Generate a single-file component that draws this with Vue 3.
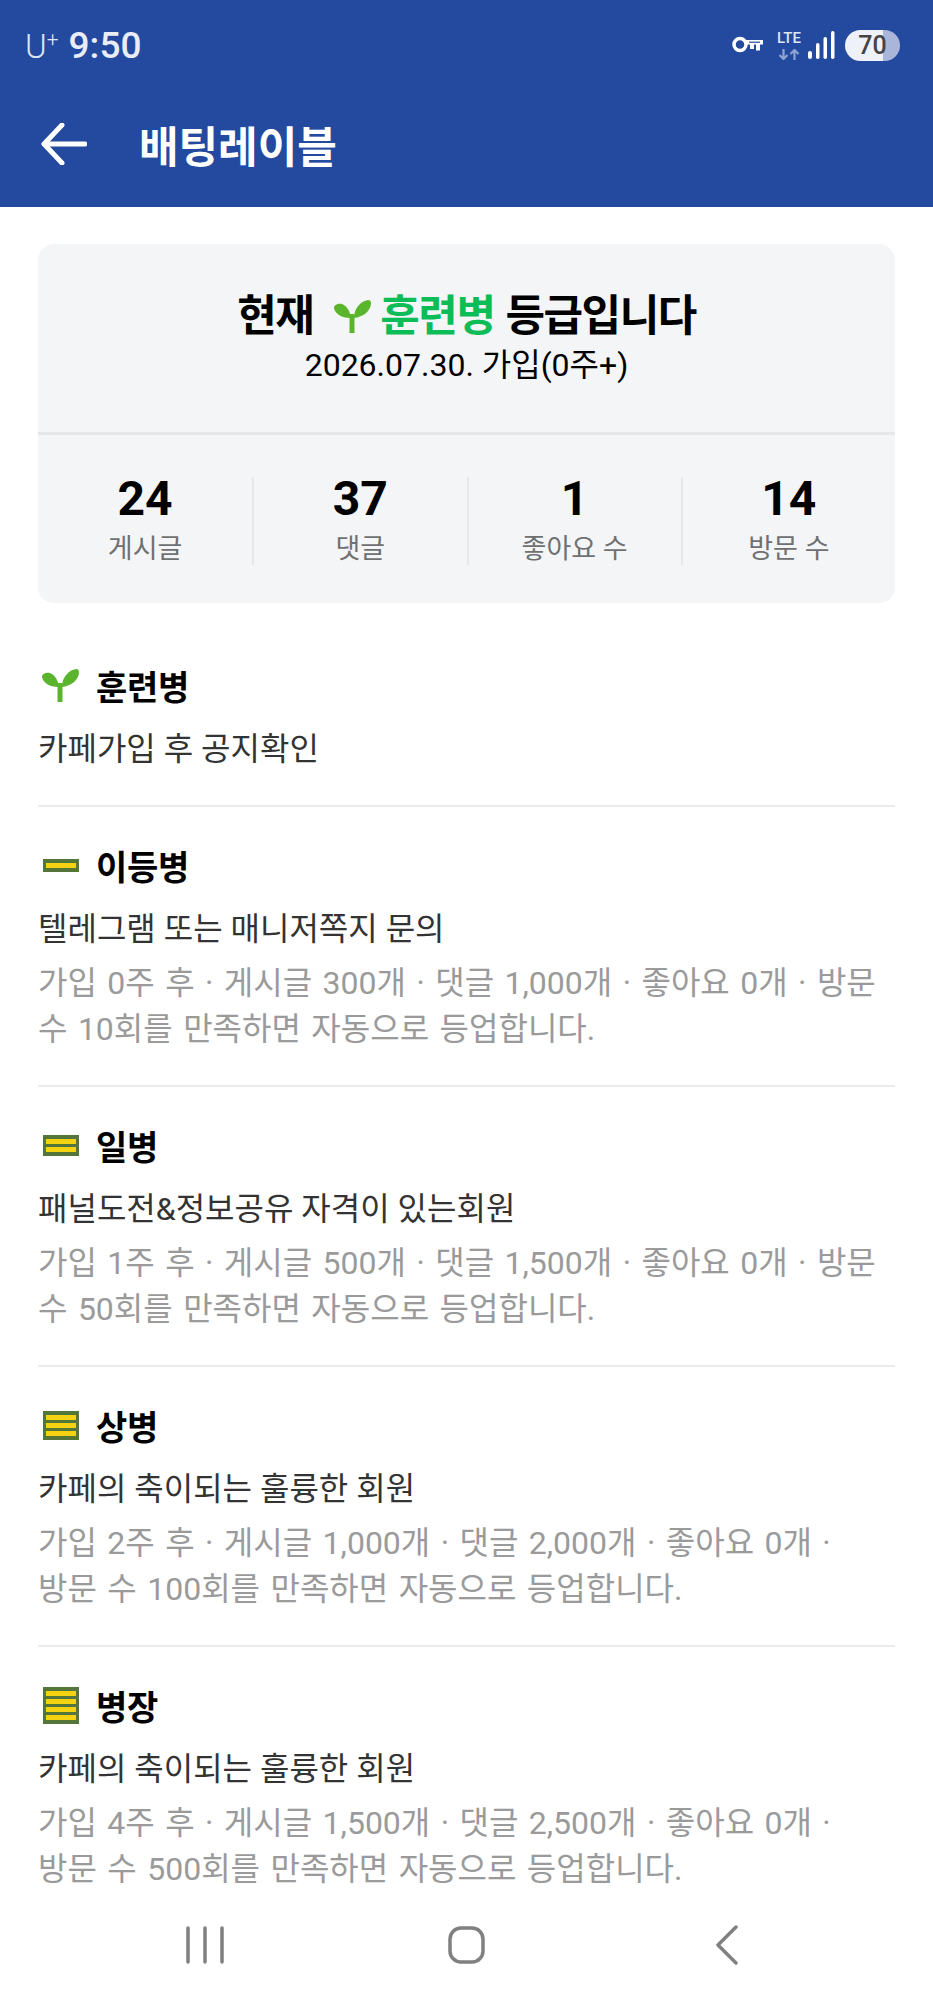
<template>
  <div class="page">
    <header class="top">
      <div class="status">
        <div class="carrier"><span class="uplus">U<sup>+</sup></span><span class="clock">9:50</span></div>
        <div class="status-icons">
          <svg class="key" width="32" height="18" viewBox="0 0 32 18">
            <circle cx="8" cy="8.500" r="6" fill="none" stroke="#fff" stroke-width="3.500" />
            <path d="M14 4h17v4.500h-3v6h-4v-6h-2v4.500h-4V8.500h-4z" fill="#fff" />
            <path d="M17 6.200h11" stroke="#234a9e" stroke-width="1.200" />
          </svg>
          <div class="lte">
            <span>LTE</span>
            <svg width="22" height="11" viewBox="0 0 22 11">
              <path d="M5.500 0v10M1.500 6l4 4 4-4" fill="none" stroke="#8ea3d0" stroke-width="2.200" />
              <path d="M16.500 11V1M12.500 5l4-4 4 4" fill="none" stroke="#8ea3d0" stroke-width="2.200" />
            </svg>
          </div>
          <svg class="signal" width="27" height="28" viewBox="0 0 27 28">
            <rect x="0" y="20" width="4" height="8" rx="2" fill="#fff" />
            <rect x="8" y="12" width="3.500" height="16" rx="1.700" fill="#fff" />
            <rect x="15.500" y="6" width="3.500" height="22" rx="1.700" fill="#fff" />
            <rect x="23" y="0" width="3.500" height="28" rx="1.700" fill="#fff" />
          </svg>
          <div class="battery">70</div>
        </div>
      </div>
      <div class="appbar">
        <svg class="back" width="46" height="42" viewBox="0 0 46 42">
          <path d="M44 21H3M21 2L3 21l18 19" fill="none" stroke="#fff" stroke-width="5" stroke-linecap="round" stroke-linejoin="round" />
        </svg>
        <h1>배팅레이블</h1>
      </div>
    </header>

    <main class="content">
      <section class="card">
        <div class="card-head">
          <div class="grade-line">
            <span>현재</span>
            <svg class="sprout-sm" width="37" height="33" viewBox="0 0 37 33">
              <path d="M15.500 14h5v19h-5z" fill="#5ab52d" />
              <path d="M16 18C8 18 1 14 0 8 0 5 4 3 8 4c5 2 8 7 9 14zM20 18C20 8 27 1 34 0c2 0 3 1 3 3 0 8-8 14-17 15z" fill="#5ab52d" />
            </svg>
            <span class="green">훈련병</span>
            <span>등급입니다</span>
          </div>
          <div class="joined">2026.07.30. 가입(0주+)</div>
        </div>
        <div class="stats">
          <div class="stat" v-for="s in stats" :key="s.label">
            <strong>{{ s.value }}</strong>
            <span>{{ s.label }}</span>
          </div>
        </div>
      </section>

      <section class="rank" v-for="r in ranks" :key="r.name">
        <div class="rank-name">
          <svg v-if="r.bars === 0" class="sprout" width="37" height="33" viewBox="0 0 37 33">
            <path d="M15.500 14h5v19h-5z" fill="#5ab52d" />
            <path d="M16 18C8 18 1 14 0 8 0 5 4 3 8 4c5 2 8 7 9 14zM20 18C20 8 27 1 34 0c2 0 3 1 3 3 0 8-8 14-17 15z" fill="#5ab52d" />
          </svg>
          <div v-else class="chevrons">
            <i v-for="n in r.bars" :key="n"></i>
          </div>
          <span>{{ r.name }}</span>
        </div>
        <p class="rank-desc">{{ r.desc }}</p>
        <p v-if="r.rule" class="rank-rule">{{ r.rule }}</p>
      </section>
    </main>

    <nav class="navbar">
      <svg width="40" height="38" viewBox="0 0 40 38">
        <path d="M3 2v34M20 2v34M37 2v34" stroke="#808080" stroke-width="3.500" stroke-linecap="round" />
      </svg>
      <svg class="home" width="37" height="38" viewBox="0 0 37 38">
        <rect x="2" y="2" width="33" height="34" rx="11" fill="none" stroke="#808080" stroke-width="3.500" />
      </svg>
      <svg width="24" height="40" viewBox="0 0 24 40">
        <path d="M21 2L3 20l18 18" fill="none" stroke="#808080" stroke-width="3.500" stroke-linecap="round" stroke-linejoin="round" />
      </svg>
    </nav>
  </div>
</template>

<script setup>
const stats = [
  { value: "24", label: "게시글" },
  { value: "37", label: "댓글" },
  { value: "1", label: "좋아요 수" },
  { value: "14", label: "방문 수" },
];

const ranks = [
  { name: "훈련병", bars: 0, desc: "카페가입 후 공지확인" },
  {
    name: "이등병",
    bars: 1,
    desc: "텔레그램 또는 매니저쪽지 문의",
    rule: "가입 0주 후 · 게시글 300개 · 댓글 1,000개 · 좋아요 0개 · 방문 수 10회를 만족하면 자동으로 등업합니다.",
  },
  {
    name: "일병",
    bars: 2,
    desc: "패널도전&정보공유 자격이 있는회원",
    rule: "가입 1주 후 · 게시글 500개 · 댓글 1,500개 · 좋아요 0개 · 방문 수 50회를 만족하면 자동으로 등업합니다.",
  },
  {
    name: "상병",
    bars: 3,
    desc: "카페의 축이되는 훌륭한 회원",
    rule: "가입 2주 후 · 게시글 1,000개 · 댓글 2,000개 · 좋아요 0개 · 방문 수 100회를 만족하면 자동으로 등업합니다.",
  },
  {
    name: "병장",
    bars: 4,
    desc: "카페의 축이되는 훌륭한 회원",
    rule: "가입 4주 후 · 게시글 1,500개 · 댓글 2,500개 · 좋아요 0개 · 방문 수 500회를 만족하면 자동으로 등업합니다.",
  },
];
</script>

<style>
html,
body {
  margin: 0;
  background: #fff;
}
</style>

<style scoped>
.page {
  width: 933px;
  height: 2000px;
  display: flex;
  flex-direction: column;
  overflow: hidden;
  background: #fff;
  font-family: Roboto, "Noto Sans CJK KR", sans-serif;
  color: #000;
}

.top {
  background: #234a9e;
  height: 207px;
  flex: none;
  color: #fff;
}

.status {
  height: 90px;
  padding: 0 33px 0 25px;
  display: flex;
  align-items: center;
  justify-content: space-between;
}

.carrier {
  display: flex;
  align-items: baseline;
  gap: 10px;
}

.uplus {
  font-size: 33px;
  font-weight: 300;
  color: #dfe5f3;
}

.uplus sup {
  font-size: 21px;
  line-height: 0;
}

.clock {
  font-size: 37px;
  font-weight: 500;
  color: #e9edf7;
}

.status-icons {
  display: flex;
  align-items: center;
}

.key {
  margin-right: 9px;
}

.lte {
  display: flex;
  flex-direction: column;
  align-items: center;
  width: 32px;
  margin-right: 3px;
  line-height: 1;
}

.lte span {
  font-size: 15px;
  font-weight: 500;
  color: #dfe5f3;
  margin-bottom: 3px;
}

.battery {
  width: 55px;
  height: 31px;
  margin-left: 10px;
  border-radius: 16px;
  background: linear-gradient(to right, #eef1fa 69%, #a9b6da 69%);
  color: #444;
  font-size: 25px;
  font-weight: 500;
  line-height: 31px;
  text-align: center;
}

.appbar {
  height: 108px;
  padding-left: 41px;
  display: flex;
  align-items: center;
  gap: 52px;
}

.appbar h1 {
  margin: 0;
  font-size: 43px;
  font-weight: 700;
  font-family: "Noto Sans CJK KR", sans-serif;
}

.content {
  flex: 1;
  min-height: 0;
  overflow: hidden;
  padding: 37px 38px 0;
}

.card {
  background: #f4f5f7;
  border-radius: 16px;
  height: 359px;
  display: flex;
  flex-direction: column;
  margin-bottom: 62px;
}

.card-head {
  height: 191px;
  border-bottom: 3px solid #e6e7ea;
  box-sizing: border-box;
  padding-top: 42px;
  text-align: center;
}

.grade-line {
  display: flex;
  justify-content: center;
  align-items: center;
  font-size: 43px;
  font-weight: 700;
  line-height: 60px;
  letter-spacing: -1.5px;
}

.sprout-sm {
  margin: 0 9px 0 21px;
}

.green {
  color: #0cbc57;
  margin-right: 11px;
}

.joined {
  font-size: 32px;
  line-height: 38px;
}

.stats {
  flex: 1;
  padding-top: 3px;
  display: grid;
  grid-template-columns: repeat(4, 1fr);
  align-items: center;
}

.stat {
  display: flex;
  flex-direction: column;
  align-items: center;
  height: 88px;
  justify-content: center;
  border-left: 2px solid #e6e7ea;
}

.stat:first-child {
  border-left: 0;
}

.stat strong {
  font-size: 48px;
  font-weight: 700;
  line-height: 50px;
  margin-top: 2px;
}

.stat span {
  font-size: 27px;
  line-height: 42px;
  margin-top: 4px;
  color: #6f7072;
}

.rank {
  padding-bottom: 33px;
  margin-bottom: 38px;
  border-bottom: 2px solid #ebebeb;
}

.rank-name {
  display: flex;
  align-items: center;
  height: 40px;
  gap: 17px;
  font-size: 34px;
  font-weight: 700;
  letter-spacing: -0.3px;
}

.sprout {
  flex: none;
  margin-left: 4px;
}

.chevrons {
  flex: none;
  box-sizing: border-box;
  width: 36px;
  margin-left: 5px;
  padding: 4px 3px;
  display: flex;
  flex-direction: column;
  gap: 3px;
  background: #55763a;
}

.chevrons i {
  display: block;
  height: 5px;
  background: #f5d312;
}

.rank-desc {
  margin: 21px 0 0;
  font-size: 32px;
  line-height: 46px;
  color: #333;
}

.rank-rule {
  margin: 8px 0 0;
  font-size: 32px;
  line-height: 46px;
  color: #9a9a9a;
  word-break: keep-all;
  word-spacing: 2.500px;
}

.navbar {
  height: 110px;
  flex: none;
  display: flex;
  align-items: center;
  justify-content: space-between;
  padding: 0 194px 0 185px;
  background: #fff;
}

.home {
  margin-right: 8px;
}
</style>
